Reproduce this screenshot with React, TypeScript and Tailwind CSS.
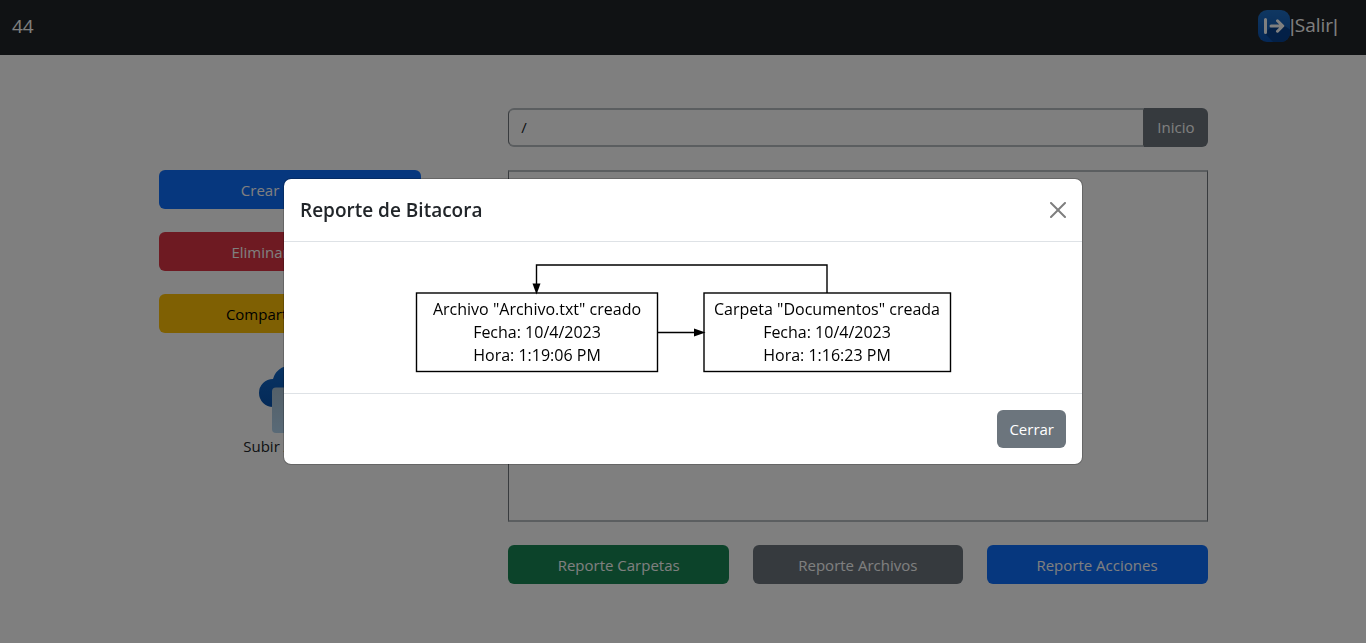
import React from "react";

const actionButton =
  "flex h-[39px] w-full items-center justify-center rounded-md px-3 text-[15px] leading-6";

function ExitIcon() {
  return (
    <svg className="size-8" viewBox="0 0 32 32" aria-hidden="true">
      <defs>
        <linearGradient id="exit-bg" x1="0" y1="0" x2="0" y2="1">
          <stop offset="0" stopColor="#1f6fc4" />
          <stop offset="1" stopColor="#0b50ad" />
        </linearGradient>
        <clipPath id="exit-clip">
          <rect width="32" height="32" rx="9" />
        </clipPath>
      </defs>
      <g clipPath="url(#exit-clip)">
        <rect width="32" height="32" fill="url(#exit-bg)" />
        <path d="M6.5 23 16 33h17V20l-8-5-13 3-4 4z" fill="#07408f" />
        <path
          d="M7.500 9.500v13M13 16h11.500M19.500 10.800 24.800 16l-5.300 5.200"
          fill="none"
          stroke="#fff"
          strokeWidth="3"
          strokeLinecap="round"
          strokeLinejoin="round"
        />
      </g>
    </svg>
  );
}

function UploadIcon() {
  return (
    <svg className="h-[70px] w-16" viewBox="0 0 64 70" aria-hidden="true">
      <defs>
        <linearGradient id="cloud" x1="0" y1="0" x2="0" y2="1">
          <stop offset="0" stopColor="#1268c8" />
          <stop offset="1" stopColor="#0753b0" />
        </linearGradient>
        <linearGradient id="sheet" x1="0" y1="0" x2="0" y2="1">
          <stop offset="0" stopColor="#a8c0d2" />
          <stop offset="1" stopColor="#b2d4ee" />
        </linearGradient>
      </defs>
      <path
        d="M15 43a14 14 0 0 1 0-28 17.500 17.500 0 0 1 34 0 14 14 0 0 1 0 28z"
        fill="url(#cloud)"
      />
      <rect x="14" y="23.500" width="36" height="45.500" rx="4" fill="url(#sheet)" />
    </svg>
  );
}

type LogEntry = { center: number; x: number; width: number; lines: string[] };

const entries: LogEntry[] = [
  {
    center: 131,
    x: 10.5,
    width: 241,
    lines: ['Archivo "Archivo.txt" creado', "Fecha: 10/4/2023", "Hora: 1:19:06 PM"],
  },
  {
    center: 421,
    x: 298,
    width: 246.5,
    lines: ['Carpeta "Documentos" creada', "Fecha: 10/4/2023", "Hora: 1:16:23 PM"],
  },
];

function LogDiagram() {
  return (
    <svg
      className="block h-[119px] w-[554px] max-w-full"
      viewBox="0 0 554 119"
      role="img"
      aria-label="Bitacora"
    >
      <g fill="none" stroke="#000" strokeWidth="1.400">
        {entries.map((entry) => (
          <rect key={entry.center} x={entry.x} y="35" width={entry.width} height="78.500" />
        ))}
        <path d="M421 35V7H130.500V27" />
        <path d="M252 74.500H289" />
      </g>
      <path d="M126.500 25.500h8L130.500 36.500z" />
      <path d="M288 70.500v8L299.500 74.500z" />
      {entries.map((entry) => (
        <g key={entry.center} className="text-[16px]" textAnchor="middle" fill="#000">
          {entry.lines.map((line, index) => (
            <text key={line} x={entry.center} y={57 + index * 23}>
              {line}
            </text>
          ))}
        </g>
      ))}
    </svg>
  );
}

function ReportDialog() {
  return (
    <div className="fixed inset-0 flex items-center justify-center bg-black/50">
      <section
        role="dialog"
        aria-modal="true"
        aria-labelledby="report-title"
        className="w-full max-w-[800px] rounded-lg border border-black/20 bg-white bg-clip-padding"
      >
        <header className="flex items-center justify-between border-b border-[#dee2e6] p-4">
          <h5 id="report-title" className="text-[19px] leading-[30px] font-semibold">
            Reporte de Bitacora
          </h5>
          <button type="button" aria-label="Close" className="opacity-50">
            <svg className="size-4" viewBox="0 0 16 16" aria-hidden="true">
              <path d="M.293.293a1 1 0 0 1 1.414 0L8 6.586 14.293.293a1 1 0 1 1 1.414 1.414L9.414 8l6.293 6.293a1 1 0 0 1-1.414 1.414L8 9.414l-6.293 6.293a1 1 0 0 1-1.414-1.414L6.586 8 .293 1.707a1 1 0 0 1 0-1.414z" />
            </svg>
          </button>
        </header>
        <div className="flex justify-center p-4">
          <LogDiagram />
        </div>
        <footer className="flex justify-end border-t border-[#dee2e6] p-4">
          <button
            type="button"
            className="rounded-md bg-[#6c757d] px-3 py-[7px] text-[15px] leading-6 text-white"
          >
            Cerrar
          </button>
        </footer>
      </section>
    </div>
  );
}

export default function App() {
  return (
    <div className="min-h-screen bg-white font-['Open_Sans','Noto_Sans',sans-serif] text-[#212529]">
      <nav className="flex h-[55px] items-center justify-between bg-[#212529] pr-7 pb-[3px] pl-3 text-[19px] text-white">
        <span>44</span>
        <a href="#salir" className="flex items-center">
          <ExitIcon />
          <span>
            <span className="font-['Liberation_Sans',sans-serif]">|</span>
            Salir
            <span className="font-['Liberation_Sans',sans-serif]">|</span>
          </span>
        </a>
      </nav>
      <main className="mx-auto flex max-w-[1049px] justify-between pt-[53px]">
        <div className="flex w-1/4 flex-col gap-[23px] pt-[62px]">
          <button type="button" className={`${actionButton} bg-[#0d6efd] text-white`}>
            Crear Carpeta
          </button>
          <button type="button" className={`${actionButton} bg-[#dc3545] text-white`}>
            Eliminar Carpeta
          </button>
          <button type="button" className={`${actionButton} bg-[#ffc107] text-black`}>
            Compartir Archivo
          </button>
          <button type="button" className="mt-2 flex flex-col items-center text-[15px] leading-6">
            <UploadIcon />
            Subir Archivo
          </button>
        </div>
        <div className="flex w-2/3 flex-col gap-[23px]">
          <div className="flex h-[39px]">
            <input
              aria-label="Ruta"
              defaultValue="/"
              className="min-w-0 flex-1 rounded-l-md border-x border-y-2 border-x-[#70777d] border-y-[#b6bcc0] px-3 text-[15px] outline-none"
            />
            <button
              type="button"
              className="rounded-r-md bg-[#6c757d] px-[13px] text-[15px] text-white"
            >
              Inicio
            </button>
          </div>
          <div className="h-[352px] border-x border-y-2 border-x-[#70777d] border-y-[#b6bcc0]" />
          <div className="flex gap-6">
            <div className="w-[221px]">
              <button type="button" className={`${actionButton} bg-[#198754] text-white`}>
                Reporte Carpetas
              </button>
            </div>
            <div className="flex-1">
              <button type="button" className={`${actionButton} bg-[#6c757d] text-white`}>
                Reporte Archivos
              </button>
            </div>
            <div className="w-[221px]">
              <button type="button" className={`${actionButton} bg-[#0d6efd] text-white`}>
                Reporte Acciones
              </button>
            </div>
          </div>
        </div>
      </main>
      <ReportDialog />
    </div>
  );
}
